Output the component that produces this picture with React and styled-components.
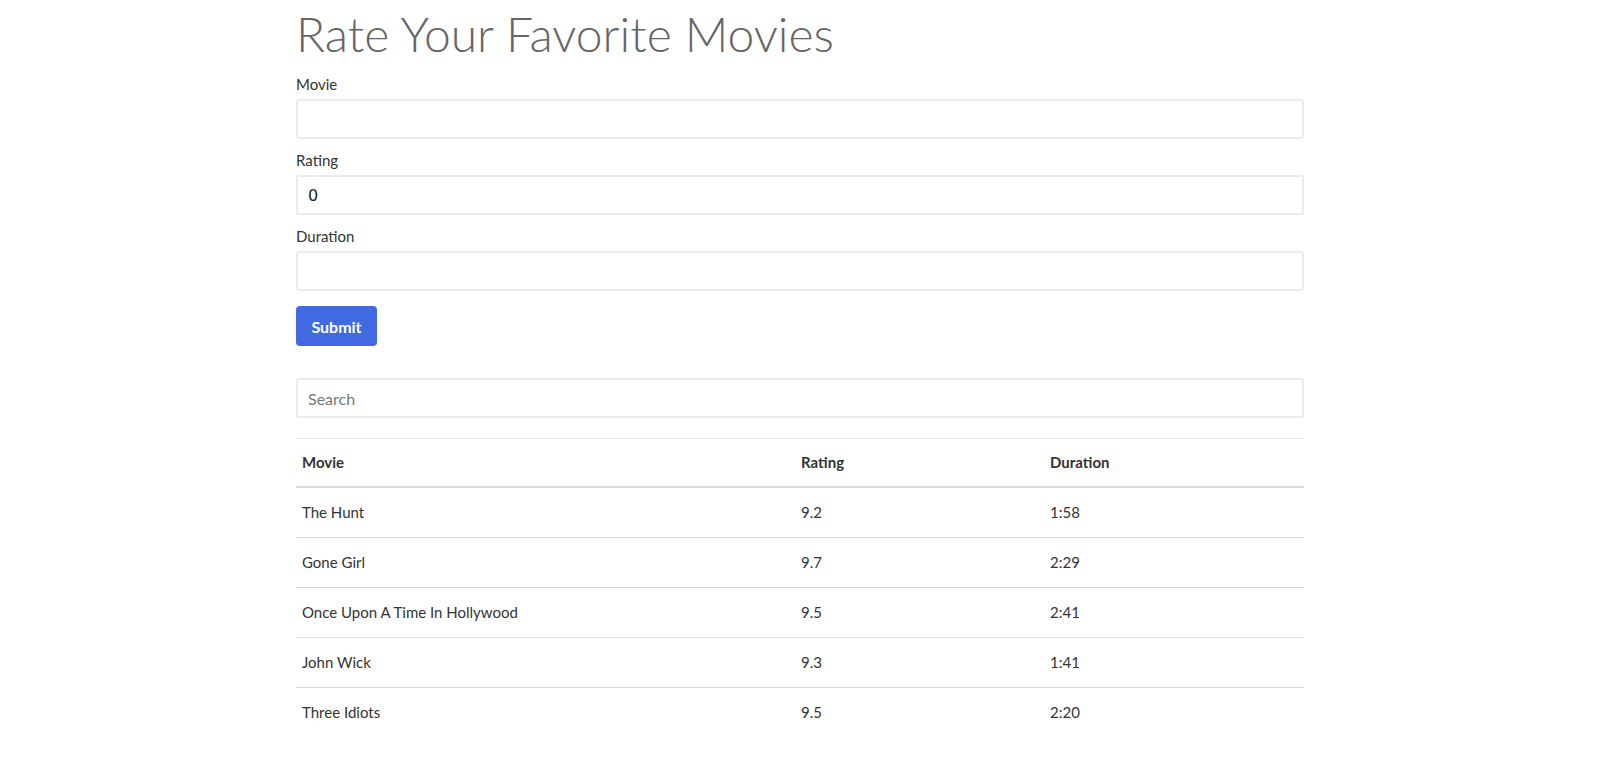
import React, { useState } from 'react'
import styled, { createGlobalStyle } from 'styled-components'

const GlobalStyle = createGlobalStyle`
body{
margin:0;
background:#fff;
font-family:Lato, "Noto Sans", sans-serif;
color:#333;
}
*{box-sizing:border-box;}
`
const Container = styled.div`
width:1008px;
margin:0 auto;
padding-top:5px;
`
const Title = styled.h1`
margin:0 0 9px 0;
font-size:48px;
line-height:58px;
font-weight:300;
color:#666;
`
const Group = styled.div`
margin-bottom:9px;
`
const Label = styled.label`
display:block;
font-size:15px;
line-height:24px;
margin-bottom:3px;
color:#333;
`
const Input = styled.input`
display:block;
width:100%;
height:40px;
padding:0 10px;
border:2px solid #ebebeb;
border-radius:3px;
outline:none;
font-size:16px;
font-family:${props => props.$plain ? '"DejaVu Sans", sans-serif' : 'Lato, sans-serif'};
color:#222;
&::placeholder{
color:#777;
}
`
const Button = styled.button`
margin-top:6px;
width:81px;
height:40px;
border:none;
border-radius:4px;
background:#4169e1;
color:#fff;
font-family:Lato, sans-serif;
font-size:16px;
font-weight:700;
cursor:pointer;
`
const Search = styled(Input)`
margin-top:32px;
`
const Table = styled.table`
width:100%;
margin-top:20px;
border-collapse:collapse;
font-size:15px;
color:#333;
`
const Th = styled.th`
text-align:left;
font-weight:700;
line-height:24px;
padding:11px 6px 12px 6px;
border-top:1px solid #e6e6e6;
border-bottom:2px solid #dcdcdc;
width:${props => props.$w || 'auto'};
`
const Td = styled.td`
line-height:25px;
padding:12px 6px;
border-top:1px solid #dcdcdc;
`

const movies = [
    { name: 'The Hunt', rating: '9.2', duration: '1:58' },
    { name: 'Gone Girl', rating: '9.7', duration: '2:29' },
    { name: 'Once Upon A Time In Hollywood', rating: '9.5', duration: '2:41' },
    { name: 'John Wick', rating: '9.3', duration: '1:41' },
    { name: 'Three Idiots', rating: '9.5', duration: '2:20' },
]

const App = () => {
    const [rating, setRating] = useState(0)
    return (
        <>
            <GlobalStyle />
            <Container>
                <Title>Rate Your Favorite Movies</Title>
                <Group>
                    <Label>Movie</Label>
                    <Input />
                </Group>
                <Group>
                    <Label>Rating</Label>
                    <Input $plain value={rating} onChange={e => setRating(e.target.value)} />
                </Group>
                <Group>
                    <Label>Duration</Label>
                    <Input />
                </Group>
                <Button>Submit</Button>
                <Search placeholder='Search' />
                <Table>
                    <thead>
                        <tr>
                            <Th $w='499px'>Movie</Th>
                            <Th $w='249px'>Rating</Th>
                            <Th>Duration</Th>
                        </tr>
                    </thead>
                    <tbody>
                        {movies.map(m => (
                            <tr key={m.name}>
                                <Td>{m.name}</Td>
                                <Td>{m.rating}</Td>
                                <Td>{m.duration}</Td>
                            </tr>
                        ))}
                    </tbody>
                </Table>
            </Container>
        </>
    )
}
export default App
